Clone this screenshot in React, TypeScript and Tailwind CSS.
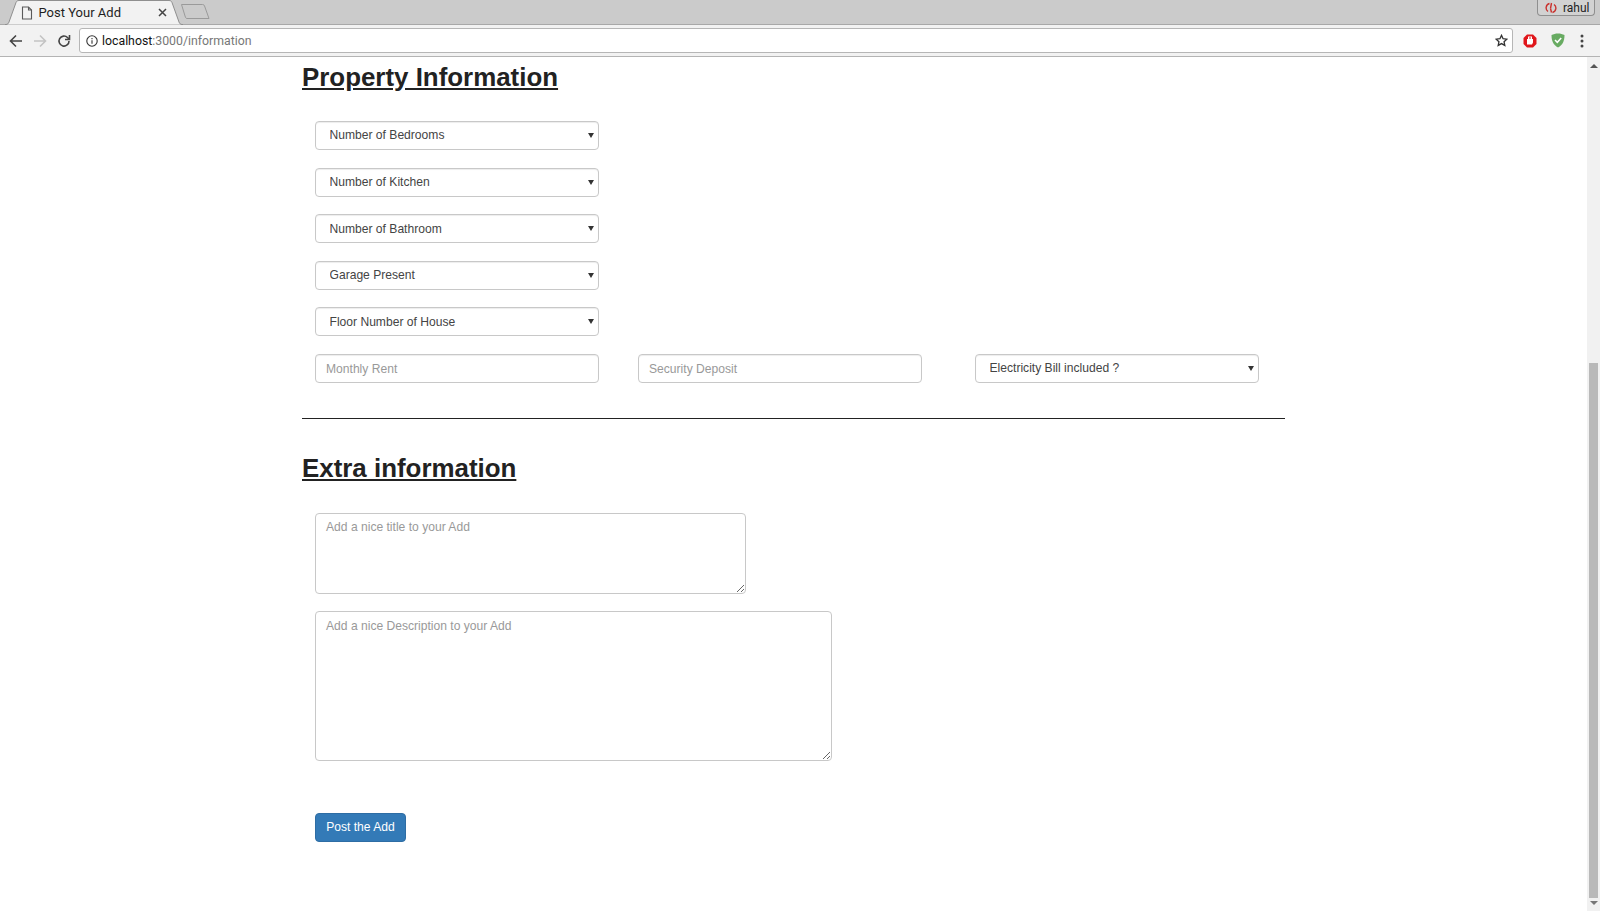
const sans = "font-['Liberation_Sans',Arial,sans-serif]";
const field =
  "h-[29px] w-[284px] rounded-[4px] border border-[#c8c8c8] bg-white text-[12.100px] text-[#444] shadow-[inset_0_1px_1px_rgba(0,0,0,0.075)] outline-none";

function TabBar() {
  return (
    <div className="flex h-[25px] items-end justify-between border-b border-[#a8a8a8] bg-[#cbcbcb]">
      <div className="flex items-end">
        <div className="relative z-10 -mb-[1px] ml-[5px] flex h-[25px] w-[178px] items-center pl-[16px] pr-[16px]">
          <svg width="178" height="25" viewBox="0 0 178 25" className="absolute left-0 top-0">
            <path d="M0 24.500h1c1.500 0 2.500-1 3-2.500L11 2.500C11.500 1.200 12.500.5 14 .5h150c1.500 0 2.500.7 3 2L174 22c.5 1.500 1.500 2.500 3 2.500h1" fill="#f2f2f2" stroke="#8f8f8f" />
          </svg>
          <svg width="12" height="14" viewBox="0 0 12 14" fill="none" stroke="#5a5a5a" strokeWidth="1.100" className="relative mr-[5.500px] shrink-0">
            <path d="M1.500 1h6l3 3v9h-9z" />
            <path d="M7.500 1v3h3" />
          </svg>
          <span className="relative flex-1 whitespace-nowrap font-['Roboto',sans-serif] text-[13px] text-[#1e1e1e]">Post Your Add</span>
          <svg width="9" height="9" viewBox="0 0 9 9" stroke="#444" strokeWidth="1.500" className="relative">
            <path d="M1 1l7 7M8 1l-7 7" />
          </svg>
        </div>
        <svg width="32" height="18" viewBox="0 0 32 18" fill="none" stroke="#9a9a9a" className="mb-[3px] ml-[-3px]">
          <path d="M1.500 1.500h21a2 2 0 0 1 2 1.400l4.500 12.600h-22a2 2 0 0 1-1.500-1z" />
        </svg>
      </div>
      <div className="mr-[5px] flex h-[16px] w-[58px] items-center gap-[6px] self-start rounded-b-[4px] border border-t-0 border-[#8f8f8f] bg-[#d2d2d2] pl-[7px] pt-[1px] font-['Roboto',sans-serif] text-[12px] leading-none text-[#222]">
        <svg width="12" height="12" viewBox="0 0 12 12" fill="none" stroke="#c9302c" strokeWidth="1.400">
          <path d="M4.500 1.500a4.500 4.500 0 0 0-1.500 8M7.500 10.500a4.500 4.500 0 0 0 1.500-8M6.500 1L5.500 6.500M5.500 6.500l1 4" />
        </svg>
        <span>rahul</span>
      </div>
    </div>
  );
}

function Toolbar() {
  return (
    <div className="flex h-[32px] items-center border-b border-[#b4b4b4] bg-[#f2f2f2]">
      <div className="flex w-[79px] shrink-0 items-center pl-[8px]">
        <svg width="16" height="16" viewBox="0 0 16 16" fill="none" stroke="#444" strokeWidth="1.600">
          <path d="M14 8H2.500M8 2.500L2.500 8 8 13.500" />
        </svg>
        <svg width="16" height="16" viewBox="0 0 16 16" fill="none" stroke="#c4c4c4" strokeWidth="1.600" className="ml-[8px]">
          <path d="M2 8h11.500M8 2.500L13.500 8 8 13.500" />
        </svg>
        <svg width="16" height="16" viewBox="0 0 16 16" fill="none" stroke="#444" strokeWidth="1.600" className="ml-[8px]">
          <path d="M13 8a5 5 0 1 1-1.500-3.500L13 6" />
          <path d="M13.500 2v4.500H9" />
        </svg>
      </div>
      <div className="flex h-[25px] w-[1434px] shrink-0 items-center rounded-[3px] border border-[#b6b6b6] bg-white pl-[6px] pr-[4px]">
        <svg width="12" height="12" viewBox="0 0 12 12" fill="none" stroke="#333" strokeWidth="1.100">
          <circle cx="6" cy="6" r="5.200" />
          <path d="M6 5.200v3.600M6 3v1.200" />
        </svg>
        <span className="ml-[4px] flex-1 whitespace-nowrap pt-[1px] font-['Roboto',sans-serif] text-[12.300px] text-[#777]">
          <span className="text-[#111]">localhost</span>:3000/information
        </span>
        <svg width="13" height="13" viewBox="0 0 24 24" fill="none" stroke="#333" strokeWidth="2.400">
          <path d="M12 2.500l2.900 6.300 6.900.8-5.100 4.700 1.400 6.800-6.100-3.400-6.100 3.400 1.400-6.800L2.200 9.600l6.900-.8z" />
        </svg>
      </div>
      <svg width="14" height="14" viewBox="0 0 14 14" className="ml-[10px]">
        <path d="M4 .5h6L13.500 4v6L10 13.500H4L.5 10V4z" fill="#e0161b" />
        <path d="M4 10.500V5h1V2.500h1V5h.5V2h1v3H8V2.500h1V5h1v3.400l-1 2.100z" fill="#fff" />
      </svg>
      <svg width="14" height="15" viewBox="0 0 14 15" className="ml-[14px]">
        <path d="M7 .5c2.400 0 4.600.7 6.500 1.600 0 5.500-1.700 10.200-6.500 12.400C2.200 12.300.5 7.600.5 2.100 2.400 1.200 4.600.5 7 .5z" fill="#68ab62" />
        <path d="M4 7l2.300 2.300L10.200 5" fill="none" stroke="#fff" strokeWidth="1.500" />
      </svg>
      <svg width="4" height="14" viewBox="0 0 4 14" fill="#444" className="ml-[15px]">
        <circle cx="2" cy="2" r="1.500" />
        <circle cx="2" cy="7" r="1.500" />
        <circle cx="2" cy="12" r="1.500" />
      </svg>
    </div>
  );
}

function SelectBox({ label }: { label: string }) {
  return (
    <div className="relative w-[284px]">
      <select className={`${field} block appearance-none pl-[13.500px] pr-[20px]`} defaultValue={label}>
        <option>{label}</option>
      </select>
      <span className="pointer-events-none absolute right-[5px] top-[12px] h-0 w-0 border-x-[3px] border-t-[5px] border-x-transparent border-t-[#333]" />
    </div>
  );
}

function Scrollbar() {
  return (
    <div className="flex w-[13px] shrink-0 flex-col items-center bg-[#f1f1f1]">
      <div className="mt-[7px] h-0 w-0 border-x-[4px] border-b-[4px] border-x-transparent border-b-[#555]" />
      <div className="mt-[295px] h-[535px] w-[9px] bg-[#b9b9b9]" />
      <div className="mt-[3px] h-0 w-0 border-x-[4px] border-t-[4px] border-x-transparent border-t-[#777]" />
    </div>
  );
}

export default function App() {
  const selects = ["Number of Bedrooms", "Number of Kitchen", "Number of Bathroom", "Garage Present", "Floor Number of House"];

  return (
    <div className={`flex h-[911px] flex-col overflow-hidden bg-white ${sans}`}>
      <TabBar />
      <Toolbar />
      <div className="flex flex-1 overflow-hidden">
        <main className="flex-1 pl-[302px] text-[#333]">
          <div className="w-[983px]">
            <h2 className="mt-[5px] text-[25.900px] font-bold leading-[31px] text-[#222] underline">Property Information</h2>
            <div className="mt-[28px] flex flex-col gap-[17.600px] pl-[13px]">
              {selects.map((s) => (
                <SelectBox key={s} label={s} />
              ))}
              <div className="flex">
                <input className={`${field} px-[10px] pt-[1px] placeholder:text-[#999]`} placeholder="Monthly Rent" />
                <input className={`${field} ml-[39px] px-[10px] pt-[1px] placeholder:text-[#999]`} placeholder="Security Deposit" />
                <div className="ml-[53px]">
                  <SelectBox label="Electricity Bill included ?" />
                </div>
              </div>
            </div>
            <hr className="mt-[35px] border-0 border-t-[1.500px] border-[#222]" />
            <h2 className="mt-[34px] text-[25.900px] font-bold leading-[31px] text-[#222] underline">Extra information</h2>
            <div className="mt-[29px] flex flex-col items-start gap-[17px] pl-[13px]">
              <textarea
                className="block h-[81px] w-[431px] rounded-[4px] border border-[#c8c8c8] px-[10px] py-[4px] text-[12.100px] text-[#444] outline-none placeholder:text-[#999]"
                placeholder="Add a nice title to your Add"
              />
              <textarea
                className="block h-[150px] w-[517px] rounded-[4px] border border-[#c8c8c8] px-[10px] py-[5px] text-[12.100px] text-[#444] outline-none placeholder:text-[#999]"
                placeholder="Add a nice Description to your Add"
              />
              <button className="mt-[35px] h-[29px] w-[91px] rounded-[4px] border border-[#2e6da4] bg-[#337ab7] text-[12.100px] text-white">
                Post the Add
              </button>
            </div>
          </div>
        </main>
        <Scrollbar />
      </div>
    </div>
  );
}
